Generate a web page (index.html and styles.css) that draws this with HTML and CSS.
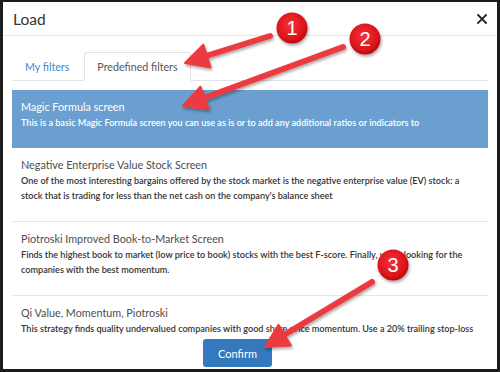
FILE: index.html
```html
<!DOCTYPE html>
<html>
<head>
<meta charset="utf-8">
<title>Load</title>
<link rel="stylesheet" href="styles.css">
</head>
<body>
<div class="modal">
  <div class="modal-header">
    <h4 class="modal-title">Load</h4>
    <span class="close" aria-label="Close">
      <svg width="10" height="10" viewBox="0 0 10 10"><path d="M1 1 L9 9 M9 1 L1 9" stroke="#222" stroke-width="1.8" stroke-linecap="square"/></svg>
    </span>
  </div>
  <div class="modal-body">
    <ul class="tabs">
      <li class="tab"><a class="tab-link">My filters</a></li>
      <li class="tab active"><a class="tab-link">Predefined filters</a></li>
    </ul>
    <div class="list">
      <div class="item selected">
        <div class="item-title">Magic Formula screen</div>
        <p class="item-desc">This is a basic Magic Formula screen you can use as is or to add any additional ratios or indicators to</p>
      </div>
      <div class="item">
        <div class="item-title">Negative Enterprise Value Stock Screen</div>
        <p class="item-desc">One of the most interesting bargains offered by the stock market is the negative enterprise value (EV) stock: a<br>stock that is trading for less than the net cash on the company's balance sheet</p>
      </div>
      <div class="item">
        <div class="item-title">Piotroski Improved Book-to-Market Screen</div>
        <p class="item-desc">Finds the highest book to market (low price to book) stocks with the best F-score. Finally, we're looking for the<br>companies with the best momentum.</p>
      </div>
      <div class="item">
        <div class="item-title">Qi Value, Momentum, Piotroski</div>
        <p class="item-desc">This strategy finds quality undervalued companies with good share price momentum. Use a 20% trailing stop-loss</p>
      </div>
    </div>
  </div>
  <div class="modal-footer">
    <button class="btn">Confirm</button>
  </div>
</div>

<svg class="annotations" width="500" height="372" viewBox="0 0 500 372">
  <defs>
    <filter id="shadow" x="-20%" y="-20%" width="140%" height="160%">
      <feDropShadow dx="1" dy="2" stdDeviation="1.4" flood-color="#000" flood-opacity="0.35"/>
    </filter>
    <radialGradient id="ball" cx="45%" cy="40%" r="60%">
      <stop offset="0%" stop-color="#f5333a"/>
      <stop offset="75%" stop-color="#dc141b"/>
      <stop offset="100%" stop-color="#b80a10"/>
    </radialGradient>
  </defs>
  <g filter="url(#shadow)">
    <line x1="270" y1="36" x2="206" y2="56" stroke="#ec3b41" stroke-width="6" stroke-linecap="round"/>
    <polygon points="185,63 203.3,44.6 210.5,67.4" fill="#ec3b41" stroke="#ec3b41" stroke-width="2" stroke-linejoin="round"/>

    <line x1="343" y1="47" x2="204" y2="98" stroke="#ec3b41" stroke-width="6" stroke-linecap="round"/>
    <polygon points="183,106 200.4,86.7 208.8,109.3" fill="#ec3b41" stroke="#ec3b41" stroke-width="2" stroke-linejoin="round"/>

    <line x1="372" y1="282" x2="284" y2="335" stroke="#ec3b41" stroke-width="6" stroke-linecap="round"/>
    <polygon points="265,347 278.5,324.8 290.9,345.4" fill="#ec3b41" stroke="#ec3b41" stroke-width="2" stroke-linejoin="round"/>
  </g>
  <g filter="url(#shadow)">
    <circle cx="292" cy="28" r="15.5" fill="url(#ball)"/>
    <circle cx="365" cy="39" r="15.5" fill="url(#ball)"/>
    <circle cx="393" cy="265" r="15.5" fill="url(#ball)"/>
  </g>
  <g class="num">
    <text x="292" y="35">1</text>
    <text x="365" y="46">2</text>
    <text x="393" y="272">3</text>
  </g>
</svg>
</body>
</html>
```

FILE: styles.css
```css
html, body {
  margin: 0;
  padding: 0;
}

body {
  width: 500px;
  height: 372px;
  box-sizing: border-box;
  padding: 2px 3px 3px 3px;
  background: #1c1c1c;
  font-family: Lato, "Open Sans", sans-serif;
  color: #333;
  position: relative;
  overflow: hidden;
}

.modal {
  background: #fff;
  height: 367px;
  display: flex;
  flex-direction: column;
}

.modal-header {
  height: 33px;
  border-bottom: 1px solid #e5e5e5;
  display: flex;
  align-items: center;
  justify-content: space-between;
  padding: 0 10px;
}

.modal-title {
  margin: 0;
  font-size: 15.5px;
  font-weight: 400;
  color: #333;
  line-height: 20px;
}

.close {
  display: flex;
  width: 10px;
  height: 10px;
}

.modal-body {
  padding: 16px 9px 0;
}

.tabs {
  list-style: none;
  margin: 0;
  padding: 0;
  display: flex;
  gap: 2px;
  border-bottom: 1px solid #e3e3e3;
}

.tab {
  margin-bottom: -1px;
}

.tab-link {
  display: block;
  padding: 6px 12px;
  line-height: 15px;
  font-size: 10.7px;
  color: #3a8ad6;
  border: 1px solid transparent;
  border-radius: 3px 3px 0 0;
}

.tab.active .tab-link {
  color: #555;
  background: #fff;
  border-color: #e3e3e3 #e3e3e3 transparent;
}

.list {
  margin-top: 9px;
  height: 247px;
  overflow: hidden;
}

.item {
  padding: 9px 9px;
  border-bottom: 1px solid #e5e5e5;
}

.item.selected {
  background: #6a9fcf;
  color: #fff;
  border-bottom: none;
}

.item-title {
  font-size: 10.8px;
  line-height: 16px;
  color: #4d4d4d;
}

.item.selected .item-title {
  color: #fff;
}

.item-desc {
  margin: 0 0 9px;
  font-size: 9.1px;
  line-height: 15px;
  font-weight: 600;
  white-space: nowrap;
}

.modal-footer {
  padding: 2px 0 0 200px;
}

.btn {
  width: 69px;
  height: 28px;
  border: none;
  border-radius: 3px;
  background: #3379bd;
  color: #fff;
  font-family: Lato, "Open Sans", sans-serif;
  font-size: 11px;
  padding: 0;
}

.annotations {
  position: absolute;
  left: 0;
  top: 0;
  pointer-events: none;
}

.num text {
  fill: #fff;
  font-family: "Liberation Sans", Arial, sans-serif;
  font-size: 20px;
  text-anchor: middle;
}
```
